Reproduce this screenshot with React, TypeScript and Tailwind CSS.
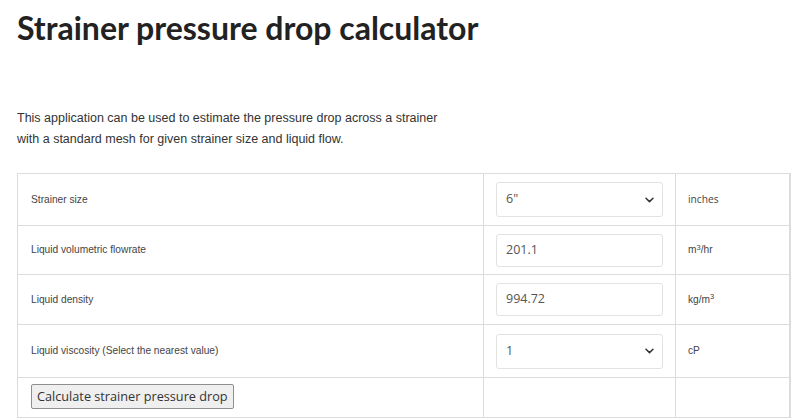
import React from "react";

function Chevron() {
  return (
    <svg width="9" height="6" viewBox="0 0 9 6" className="shrink-0">
      <path d="M1 1.2 L4.5 4.6 L8 1.2" fill="none" stroke="#333" strokeWidth="1.5" strokeLinecap="round" strokeLinejoin="round" />
    </svg>
  );
}

function SelectBox({ value }: { value: string }) {
  return (
    <div className="flex h-[35px] w-[167px] items-center justify-between rounded-[3px] border border-[#e2e2e2] bg-white pl-[9px] pr-[8px] text-[12.5px] text-[#555]" style={{ fontFamily: '"Open Sans", sans-serif' }}>
      <span>{value}</span>
      <Chevron />
    </div>
  );
}

function InputBox({ value }: { value: string }) {
  return (
    <div className="flex h-[33px] w-[167px] items-center rounded-[3px] border border-[#e2e2e2] bg-white pl-[9px] text-[12.5px] text-[#555]" style={{ fontFamily: '"Open Sans", sans-serif' }}>
      {value}
    </div>
  );
}

const labelCls = "border border-[#dcdcdc] pl-[13px] align-middle text-[10.2px] text-[#444]";
const midCls = "border border-[#dcdcdc] pl-[12px] align-middle";
const unitCls = "border border-[#dcdcdc] border-r-2 pl-[12px] align-middle text-[10.2px] text-[#444]";

export default function App() {
  return (
    <div className="min-h-[420px] bg-white px-[17px]" style={{ fontFamily: '"Liberation Sans", Arial, sans-serif' }}>
      <h1 className="pt-[6px] text-[32px] font-bold leading-[44px] text-[#222]" style={{ fontFamily: 'Lato, sans-serif' }}>
        Strainer pressure drop calculator
      </h1>
      <p className="mt-[58px] text-[12.5px] leading-[21px] text-[#333]">
        This application can be used to estimate the pressure drop across a strainer
        <br />
        with a standard mesh for given strainer size and liquid flow.
      </p>
      <table className="mt-[23px] w-[772px] table-fixed border-collapse">
        <colgroup>
          <col className="w-[466px]" />
          <col className="w-[192px]" />
          <col className="w-[114px]" />
        </colgroup>
        <tbody>
          <tr className="h-[52px]">
            <td className={labelCls}>Strainer size</td>
            <td className={midCls}><SelectBox value={'6"'} /></td>
            <td className={unitCls} style={{ fontFamily: '"Open Sans", sans-serif' }}>inches</td>
          </tr>
          <tr className="h-[49px]">
            <td className={labelCls}>Liquid volumetric flowrate</td>
            <td className={midCls}><InputBox value="201.1" /></td>
            <td className={unitCls}>m<sup className="text-[7.5px]">3</sup>/hr</td>
          </tr>
          <tr className="h-[50px]">
            <td className={labelCls}>Liquid density</td>
            <td className={midCls}><InputBox value="994.72" /></td>
            <td className={unitCls}>kg/m<sup className="text-[7.5px]">3</sup></td>
          </tr>
          <tr className="h-[53px]">
            <td className={labelCls}>Liquid viscosity (Select the nearest value)</td>
            <td className={midCls}><SelectBox value="1" /></td>
            <td className={unitCls}>cP</td>
          </tr>
          <tr className="h-[40px]">
            <td className="border border-[#dcdcdc] pl-[13px] align-top pt-[6px]">
              <button className="h-[25px] rounded-[2px] border border-[#8f8f8f] bg-[#efefef] px-[5px] text-[12.7px] text-[#333]" style={{ fontFamily: '"Open Sans", sans-serif' }}>
                Calculate strainer pressure drop
              </button>
            </td>
            <td className="border border-[#dcdcdc]"></td>
            <td className="border border-[#dcdcdc] border-r-2"></td>
          </tr>
        </tbody>
      </table>
    </div>
  );
}
